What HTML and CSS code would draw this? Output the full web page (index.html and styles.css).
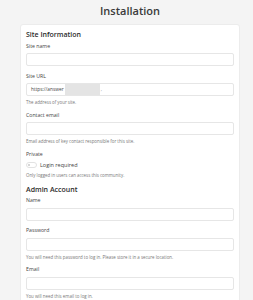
FILE: index.html
```html
<html>
<head>
	<title>Installation</title>
<link rel="stylesheet" href="styles.css">
</head>
<body>
	<h1 class="title">Installation</h1>
	<div class="card">
		<div class="section-title">Site Information</div>
		<div class="group">
			<label class="label">Site name</label>
			<div class="input"></div>
		</div>
		<div class="group">
			<label class="label">Site URL</label>
			<div class="input">https://answer<span class="redacted"></span><span class="tick">,</span></div>
			<div class="help">The address of your site.</div>
		</div>
		<div class="group">
			<label class="label">Contact email</label>
			<div class="input"></div>
			<div class="help">Email address of key contact responsible for this site.</div>
		</div>
		<div class="group">
			<label class="label">Private</label>
			<div class="switch-row">
				<span class="switch"><span class="knob"></span></span>
				<span>Login required</span>
			</div>
			<div class="help">Only logged in users can access this community.</div>
		</div>
		<div class="section-title">Admin Account</div>
		<div class="group">
			<label class="label">Name</label>
			<div class="input"></div>
		</div>
		<div class="group">
			<label class="label">Password</label>
			<div class="input"></div>
			<div class="help">You will need this password to log in. Please store it in a secure location.</div>
		</div>
		<div class="group">
			<label class="label">Email</label>
			<div class="input"></div>
			<div class="help">You will need this email to log in.</div>
		</div>
	</div>
</body>
</html>
```

FILE: styles.css
```css
body {
	background-color: #f4f4f4;
	font-family: "Open Sans", "Noto Sans", sans-serif;
	color: #333;
	margin: 0;
	overflow: hidden;
}

.title {
	font-size: 11px;
	font-weight: 600;
	line-height: 16px;
	text-align: center;
	color: #3a3a3a;
	margin: 3px 0 5px 7px;
}

.card {
	background-color: white;
	border: 1px solid #ececec;
	border-radius: 3px;
	margin-left: 20px;
	width: 220px;
	box-sizing: border-box;
	height: 280px;
	padding: 5px 5px 0 5px;
}

.section-title {
	font-size: 7px;
	font-weight: 600;
	line-height: 10px;
	color: #2b2b2b;
	margin-bottom: 2.5px;
}

.group {
	margin-bottom: 6.5px;
}

.label {
	display: block;
	font-size: 5.2px;
	line-height: 7px;
	color: #444;
	margin-bottom: 3.5px;
}

.input {
	height: 13px;
	box-sizing: border-box;
	border: 1px solid #e6e6e6;
	border-radius: 2px;
	font-size: 4.8px;
	line-height: 11px;
	padding-left: 4px;
	color: #444;
	display: flex;
	align-items: center;
}

.redacted {
	display: inline-block;
	width: 35px;
	height: 11px;
	background-color: #e4e4e4;
	margin-left: 1px;
}

.tick {
	color: #999;
	margin-left: 1px;
}

.help {
	font-size: 4.4px;
	line-height: 6px;
	color: #777;
	margin-top: 3px;
}

.switch-row {
	display: flex;
	align-items: center;
	gap: 3px;
	font-size: 5.5px;
	line-height: 8px;
	color: #444;
}

.switch {
	display: inline-block;
	width: 11px;
	height: 6px;
	box-sizing: border-box;
	border: 1px solid #e2e2e2;
	border-radius: 3px;
	position: relative;
}

.knob {
	position: absolute;
	left: 1px;
	top: 1px;
	width: 2px;
	height: 2px;
	border-radius: 50%;
	background-color: #c8c8c8;
}
```
